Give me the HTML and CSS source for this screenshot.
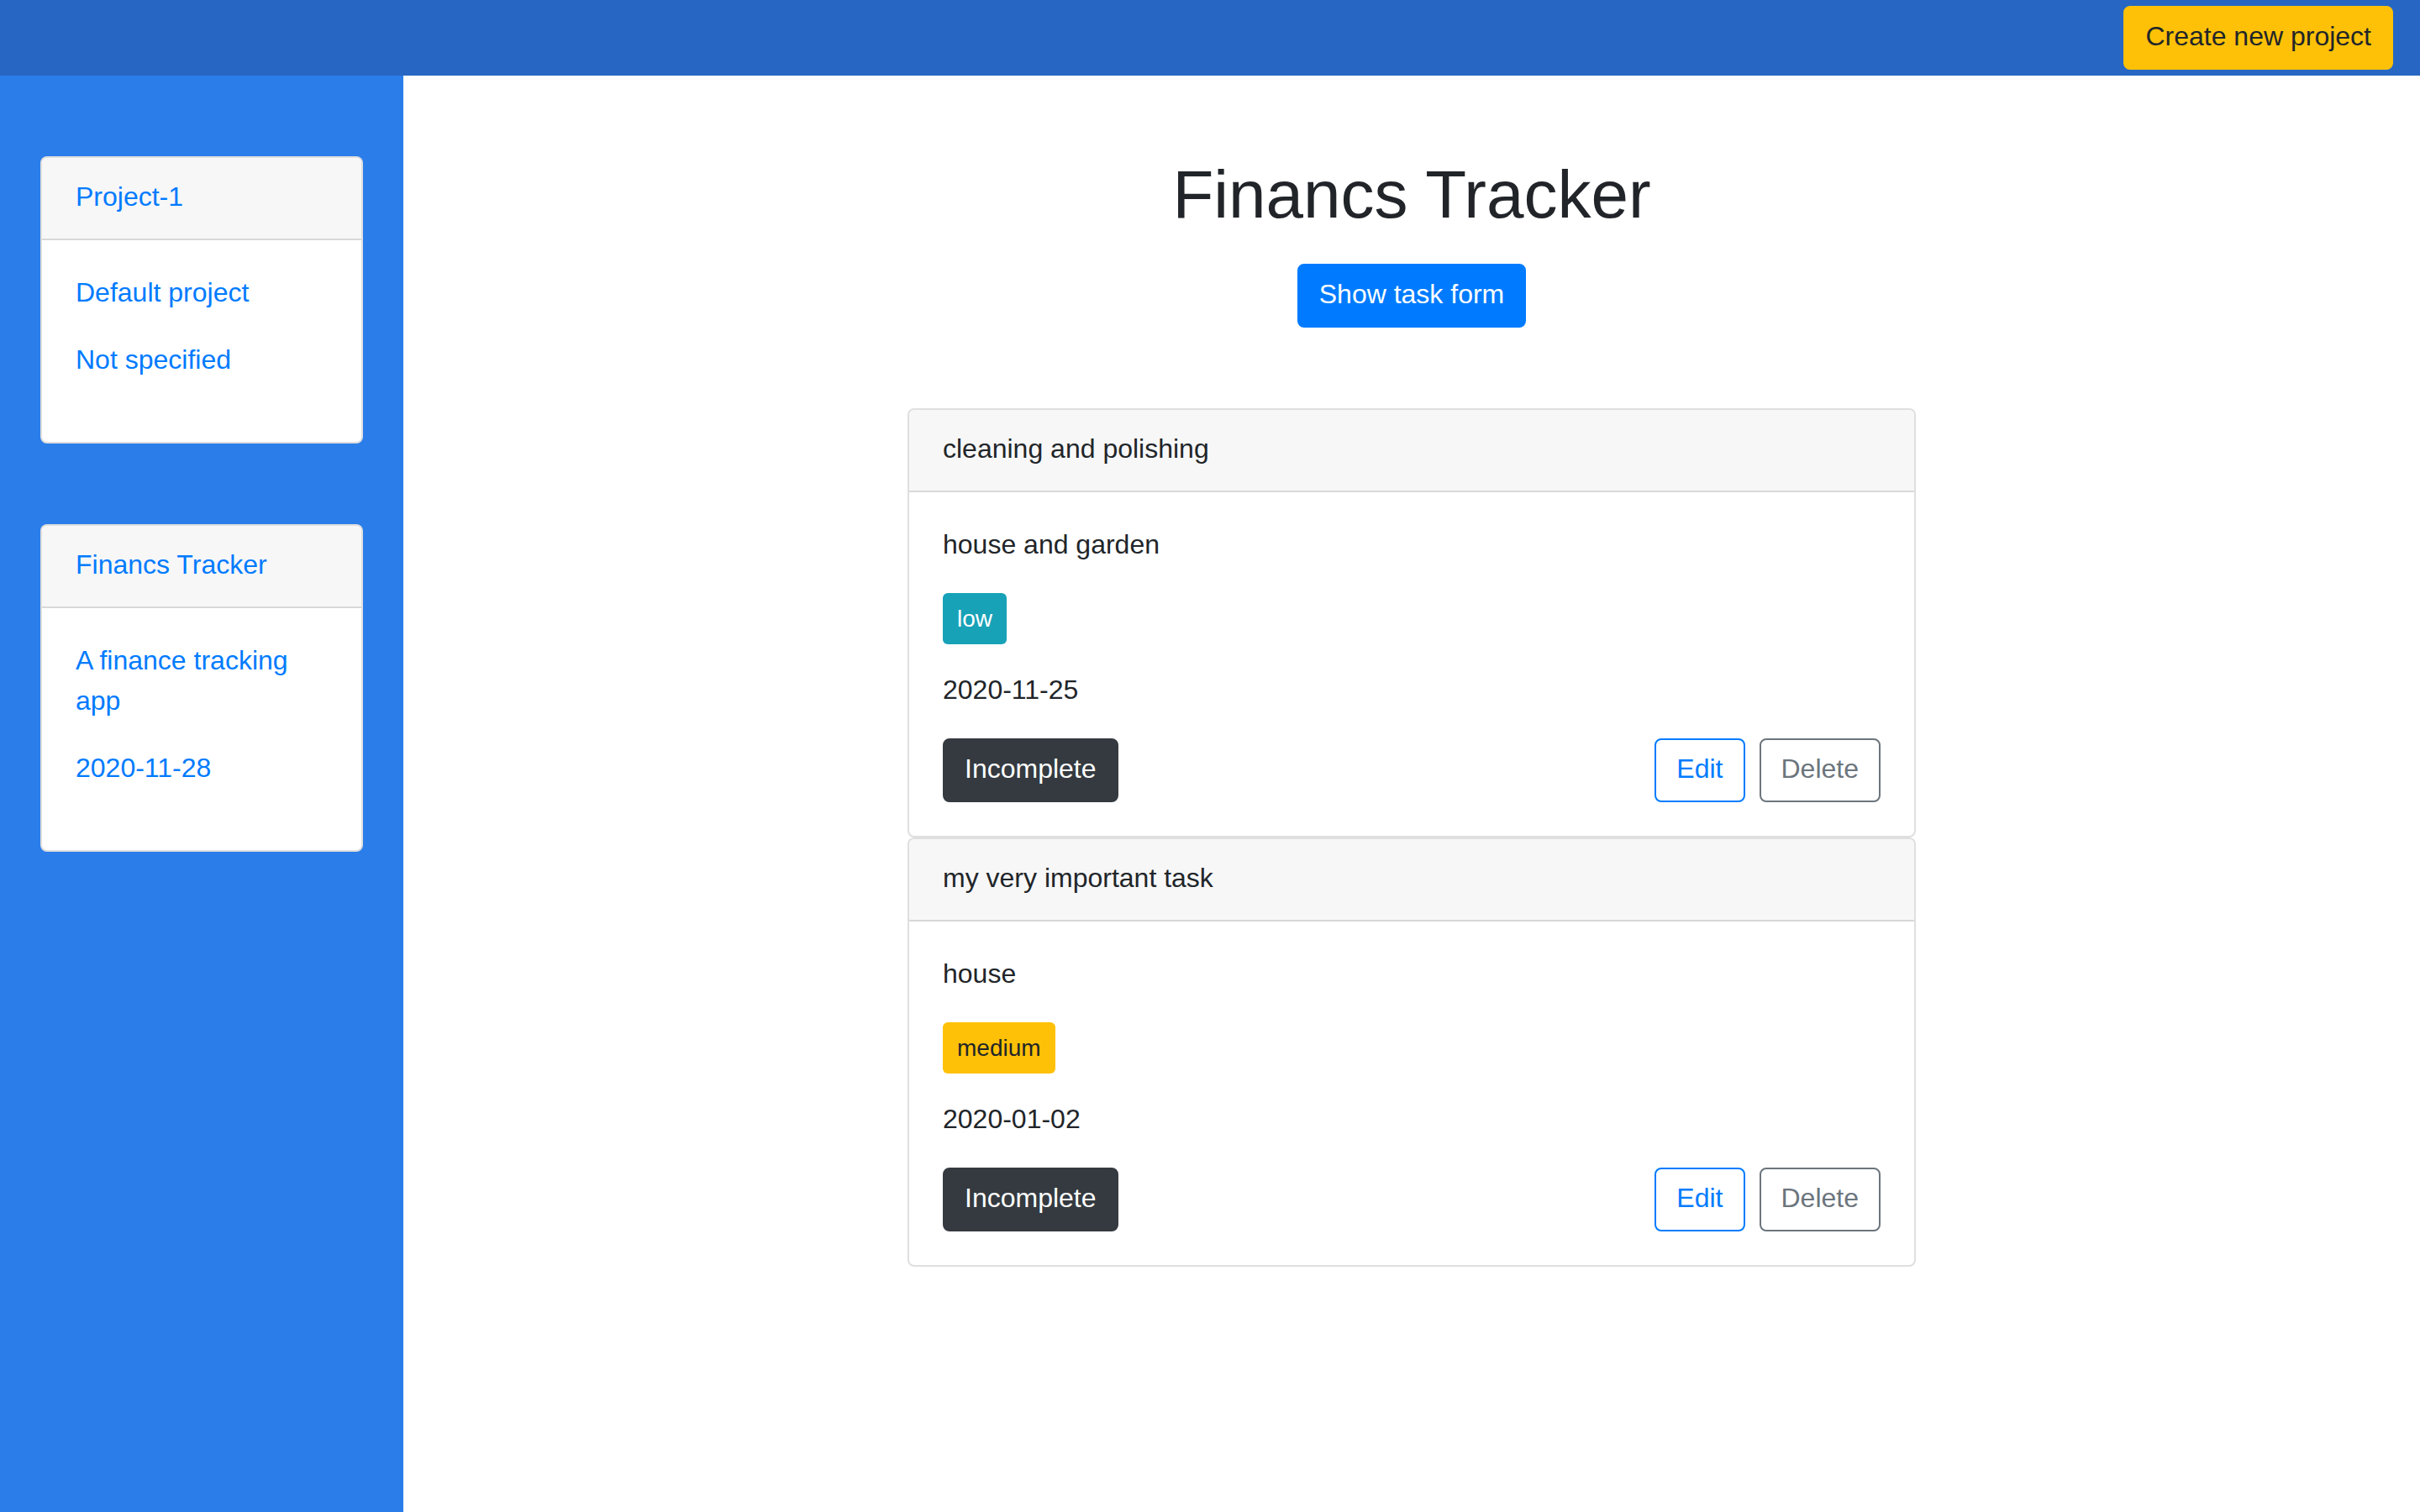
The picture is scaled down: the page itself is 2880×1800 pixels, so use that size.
FILE: index.html
```html
<!DOCTYPE html>
<html lang="en">
<head>
<meta charset="utf-8">
<title>Financs Tracker</title>
<link rel="stylesheet" href="styles.css">
</head>
<body>
<header class="topbar">
  <button class="btn btn-warning">Create new project</button>
</header>
<div class="layout">
  <aside class="sidebar">
    <div class="card">
      <div class="card-header link">Project-1</div>
      <div class="card-body">
        <p class="link">Default project</p>
        <p class="link">Not specified</p>
      </div>
    </div>
    <div class="card">
      <div class="card-header link">Financs Tracker</div>
      <div class="card-body">
        <p class="link">A finance tracking app</p>
        <p class="link">2020-11-28</p>
      </div>
    </div>
  </aside>
  <main class="main">
    <h1 class="title">Financs Tracker</h1>
    <button class="btn btn-primary">Show task form</button>
    <div class="tasks">
      <div class="card task">
        <div class="card-header">cleaning and polishing</div>
        <div class="card-body">
          <p>house and garden</p>
          <div class="badge-row"><span class="badge badge-info">low</span></div>
          <p>2020-11-25</p>
          <div class="actions">
            <button class="btn btn-dark">Incomplete</button>
            <div class="action-group">
              <button class="btn btn-outline-primary">Edit</button>
              <button class="btn btn-outline-secondary">Delete</button>
            </div>
          </div>
        </div>
      </div>
      <div class="card task">
        <div class="card-header">my very important task</div>
        <div class="card-body">
          <p>house</p>
          <div class="badge-row"><span class="badge badge-warning">medium</span></div>
          <p>2020-01-02</p>
          <div class="actions">
            <button class="btn btn-dark">Incomplete</button>
            <div class="action-group">
              <button class="btn btn-outline-primary">Edit</button>
              <button class="btn btn-outline-secondary">Delete</button>
            </div>
          </div>
        </div>
      </div>
    </div>
  </main>
</div>
</body>
</html>
```

FILE: styles.css
```css
* { box-sizing: border-box; }
html, body {
  margin: 0;
  padding: 0;
}
body {
  font-family: "Liberation Sans", Arial, sans-serif;
  font-size: 32px;
  line-height: 48px;
  color: #212529;
  background: #fff;
}
p { margin: -2px 0 34px 0; }

.topbar {
  height: 90px;
  background: #2767c3;
  display: flex;
  align-items: center;
  justify-content: flex-end;
  padding: 0 32px;
}

.btn {
  font-family: inherit;
  font-size: 32px;
  line-height: 48px;
  padding: 10px 24px 14px 24px;
  border: 2px solid transparent;
  border-radius: 8px;
  background: transparent;
  cursor: pointer;
  display: inline-block;
  margin: 0;
}
.btn-warning { background: #ffc107; border-color: #ffc107; color: #212529; }
.btn-primary { background: #007bff; border-color: #007bff; color: #fff; }
.btn-dark { background: #343a40; border-color: #343a40; color: #fff; }
.btn-outline-primary { border-color: #007bff; color: #007bff; }
.btn-outline-secondary { border-color: #6c757d; color: #6c757d; }

.layout {
  display: flex;
  min-height: 1710px;
}
.sidebar {
  width: 480px;
  flex: 0 0 480px;
  background: #2b7dea;
  padding: 96px 48px;
  display: flex;
  flex-direction: column;
  gap: 96px;
}

.card {
  background: #fff;
  border: 2px solid rgba(0,0,0,0.125);
  border-radius: 8px;
  overflow: hidden;
}
.card-header {
  background: #f7f7f7;
  padding: 22px 40px 26px 40px;
  border-bottom: 2px solid rgba(0,0,0,0.125);
}
.card-body {
  padding: 40px;
}
.link { color: #007bff; }

.main {
  flex: 1;
  display: flex;
  flex-direction: column;
  align-items: center;
  padding-top: 94px;
}
.title {
  font-size: 80px;
  line-height: 96px;
  font-weight: 500;
  margin: 0 0 34px 0;
  color: #212529;
}
.tasks {
  width: 1200px;
  margin-top: 96px;
  display: flex;
  flex-direction: column;
}
.task .card-header { color: #212529; }

.badge-row {
  display: flex;
  margin-bottom: 32px;
}
.badge {
  font-size: 28px;
  line-height: 41px;
  padding: 10px 17px;
  border-radius: 6px;
}
.badge-info { background: #17a2b8; color: #fff; }
.badge-warning { background: #ffc107; color: #212529; }

.actions {
  display: flex;
  justify-content: space-between;
  align-items: center;
}
.action-group {
  display: flex;
  gap: 17px;
}
```
